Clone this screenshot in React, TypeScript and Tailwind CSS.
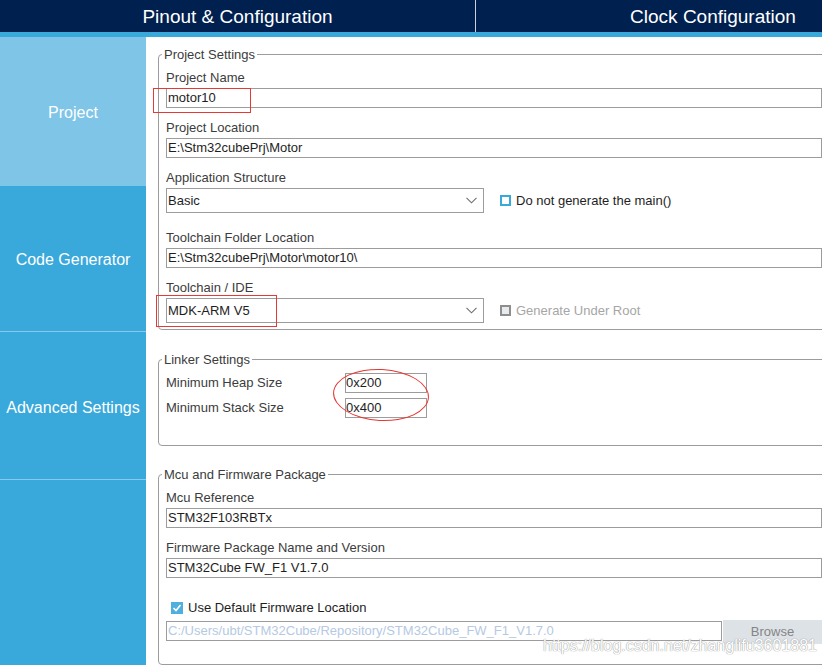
import type { ReactNode } from 'react';

const FONT = { fontFamily: '"Liberation Sans", Arial, sans-serif' };

function Chevron() {
  return (
    <svg width="11" height="7" viewBox="0 0 11 7" className="shrink-0">
      <polyline points="0.5,0.8 5.5,5.8 10.5,0.8" fill="none" stroke="#6f6f6f" strokeWidth="1.1" />
    </svg>
  );
}

function Field({ label, value, className }: { label: string; value: string; className?: string }) {
  return (
    <div className={className}>
      <div className="leading-[16px] mb-[2px] text-[#3c3c3c]">{label}</div>
      <div className="h-[20px] border border-[#9c9c9c] leading-[18px] pl-[1px] text-[#1e1e1e] whitespace-nowrap overflow-hidden">
        {value}
      </div>
    </div>
  );
}

function SelectRow({
  label,
  value,
  side,
  className,
}: {
  label: string;
  value: string;
  side: ReactNode;
  className?: string;
}) {
  return (
    <div className={className}>
      <div className="leading-[16px] mb-[2px] text-[#3c3c3c]">{label}</div>
      <div className="flex items-center">
        <div className="w-[318px] h-[25px] border border-[#9c9c9c] flex items-center pl-[1px] pr-[6px] text-[#1e1e1e]">
          <span className="flex-1">{value}</span>
          <Chevron />
        </div>
        <div className="ml-[16px] flex items-center gap-[5px]">{side}</div>
      </div>
    </div>
  );
}

function Group({ title, children, className }: { title: string; children: ReactNode; className?: string }) {
  return (
    <fieldset className={`border border-[#9c9c9c] rounded-[4px] pl-[7px] pr-[3px] mr-[-4px] ${className ?? ''}`}>
      <legend className="ml-[-4px] px-[2px] leading-[15px] text-[#3c3c3c]">{title}</legend>
      {children}
    </fieldset>
  );
}

export default function App() {
  return (
    <div className="relative w-[822px] h-[665px] overflow-hidden bg-white text-[13px]" style={FONT}>
      {/* Top tabs */}
      <div className="h-[32px] bg-[#00204f] flex text-white text-[19px] whitespace-nowrap">
        <div className="w-[476px] shrink-0 border-r border-[#c9d1e0] flex items-center justify-center pt-[2px]">
          Pinout &amp; Configuration
        </div>
        <div className="w-[476px] shrink-0 flex items-center justify-center pr-[2px] pt-[2px]">Clock Configuration</div>
      </div>
      <div className="h-[5px] bg-[#39a8db]" />

      <div className="flex h-[628px]">
        {/* Sidebar */}
        <div className="w-[146px] flex flex-col bg-[#39a8db] text-white text-[16px]">
          <div className="h-[149px] bg-[#7ec5e8] flex items-center justify-center pt-[2px]">Project</div>
          <div className="h-[146px] border-b border-[#86cbee] flex items-center justify-center pt-[3px]">Code Generator</div>
          <div className="h-[148px] border-b border-[#86cbee] flex items-center justify-center pt-[4px]">Advanced Settings</div>
          <div className="flex-1" />
        </div>

        {/* Settings */}
        <div className="flex-1 pl-[12px] pt-[10px]">
          <Group title="Project Settings" className="pb-[6px]">
            <Field label="Project Name" value="motor10" className="mt-[8px]" />
            <Field label="Project Location" value="E:\Stm32cubePrj\Motor" className="mt-[12px]" />
            <SelectRow
              label="Application Structure"
              value="Basic"
              className="mt-[12px]"
              side={
                <>
                  <span className="w-[11px] h-[11px] border-2 border-[#39a8db] bg-white" />
                  <span className="text-[#1e1e1e]">Do not generate the main()</span>
                </>
              }
            />
            <Field label="Toolchain Folder Location" value="E:\Stm32cubePrj\Motor\motor10\" className="mt-[17px]" />
            <SelectRow
              label="Toolchain / IDE"
              value="MDK-ARM V5"
              className="mt-[12px]"
              side={
                <>
                  <span className="w-[11px] h-[11px] border-2 border-[#8e8e8e] bg-[#e7ebee]" />
                  <span className="text-[#a6a6a6]">Generate Under Root</span>
                </>
              }
            />
          </Group>

          <Group title="Linker Settings" className="mt-[22px] pb-[27px]">
            <div className="mt-[6px] flex flex-col gap-[5px]">
              {[
                ['Minimum Heap Size', '0x200'],
                ['Minimum Stack Size', '0x400'],
              ].map(([label, value]) => (
                <div key={label} className="flex items-center">
                  <span className="w-[179px] text-[#3c3c3c]">{label}</span>
                  <span className="w-[82px] h-[20px] border border-[#9c9c9c] leading-[18px] text-[#1e1e1e]">{value}</span>
                </div>
              ))}
            </div>
          </Group>

          <Group title="Mcu and Firmware Package" className="mt-[21px] pb-[20px]">
            <Field label="Mcu Reference" value="STM32F103RBTx" className="mt-[8px]" />
            <Field label="Firmware Package Name and Version" value="STM32Cube FW_F1 V1.7.0" className="mt-[12px]" />
            <div className="mt-[22px] flex items-center pl-[5px] leading-[16px]">
              <span className="w-[12px] h-[12px] bg-[#4fb0e0] flex items-center justify-center">
                <svg width="10" height="10" viewBox="0 0 10 10">
                  <polyline points="1.5,5 4,7.5 8.5,2" fill="none" stroke="#fff" strokeWidth="1.6" />
                </svg>
              </span>
              <span className="ml-[5px] text-[#1e1e1e]">Use Default Firmware Location</span>
            </div>
            <div className="mt-[4px] flex items-start">
              <div className="w-[556px] h-[20px] mt-[1px] border border-[#9c9c9c] leading-[18px] pl-[1px] text-[#b5c9e3]">
                C:/Users/ubt/STM32Cube/Repository/STM32Cube_FW_F1_V1.7.0
              </div>
              <button className="ml-[1px] flex-1 h-[24px] bg-[#dde2e6] text-[#858585] text-[13px]">Browse</button>
            </div>
          </Group>
        </div>
      </div>

      {/* Red annotations */}
      <div className="absolute left-[153px] top-[88px] w-[98px] h-[25px] border border-[#e53935]" />
      <div className="absolute left-[156px] top-[295px] w-[121px] h-[32px] border border-[#e53935]" />
      <div className="absolute left-[333px] top-[369px] w-[96px] h-[52px] rounded-[50%] border border-[#e53935] rotate-[3deg]" />

      {/* Watermark */}
      <div
        className="absolute left-[543px] top-[637px] text-[16px] leading-[18px] text-white"
        style={{ textShadow: '0 0 1px #9a9a9a, 0 0 1px #9a9a9a' }}
      >
        https://blog.csdn.net/zhanglifu3601881
      </div>
    </div>
  );
}
